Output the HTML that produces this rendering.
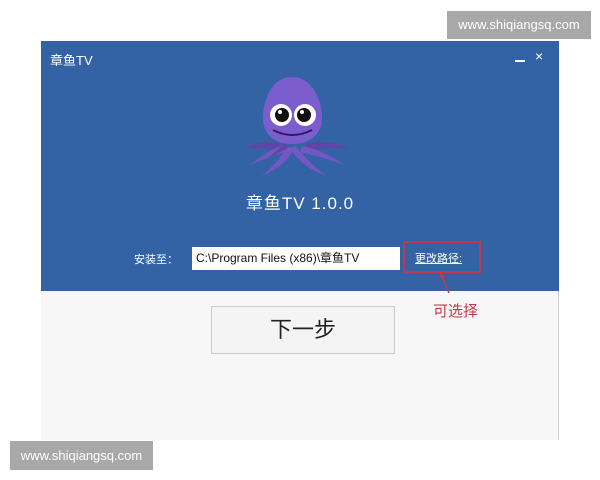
<!DOCTYPE html>
<html><head><meta charset="utf-8"><style>
*{margin:0;padding:0;box-sizing:border-box}
body{width:600px;height:480px;background:#fff;position:relative;overflow:hidden;font-family:"Liberation Sans","Noto Sans CJK SC",sans-serif}
.wm{position:absolute;background:#a8a8a8;color:#fff;font-size:13px;line-height:28px;text-align:center}
#win{position:absolute;left:41px;top:41px;width:518px;height:399px;background:#f7f7f7;border-right:1px solid #ccc}
#blue{position:absolute;left:0;top:0;width:518px;height:250px;background:#3463a5}
.abs{position:absolute}
</style></head><body>
<div class="wm" style="left:447px;top:11px;width:144px;height:28px">www.shiqiangsq.com</div>
<div id="win">
 <div id="blue">
  <div class="abs" style="left:9px;top:9px;color:#fff;font-size:13px">章鱼TV</div>
  <div class="abs" style="left:474px;top:19px;width:10px;height:2px;background:#fff"></div>
  <div class="abs" style="left:494px;top:7px;color:#fff;font-size:14px">×</div>
  <div class="abs" style="left:0;width:518px;top:148px;text-align:center;color:#fff;font-size:17px;letter-spacing:1px">章鱼TV 1.0.0</div>
  <div class="abs" style="left:93px;top:210px;color:#fff;font-size:11px">安装至：</div>
  <div class="abs" style="left:151px;top:206px;width:208px;height:23px;background:#fff;font-size:12px;line-height:23px;padding-left:4px;color:#111">C:\Program Files (x86)\章鱼TV</div>
  <div class="abs" style="left:374px;top:209px;color:#fff;font-size:11px;text-decoration:underline">更改路径:</div>
  <div class="abs" style="left:362px;top:200px;width:78px;height:32px;border:2px solid #c0394a"></div>
 </div>
 <svg class="abs" style="left:390px;top:225px" width="30" height="30"><path d="M10 7 L18 27" stroke="#c0394a" stroke-width="1.5"/><path d="M8 5 L10 14 L14 11Z" fill="#c0394a"/></svg>
 <div class="abs" style="left:392px;top:259px;color:#c0394a;font-size:15px">可选择</div>
 <div class="abs" style="left:170px;top:265px;width:184px;height:48px;border:1px solid #ccc;background:#f4f4f4;text-align:center;line-height:46px;font-size:22px;color:#222">下一步</div>
</div>
<svg class="abs" style="left:200px;top:60px" width="200" height="130" viewBox="200 60 200 130">
 <g fill="#7456c4">
  <path d="M244 148 Q262 140 280 143 L282 150 Q262 148 244 148Z" fill="#5f45a8"/>
  <path d="M350 148 Q330 140 306 143 L304 150 Q328 148 350 148Z" fill="#5f45a8"/>
  <path d="M250 165 Q268 150 282 146 L286 152 Q270 156 250 165Z"/>
  <path d="M344 165 Q324 150 302 146 L300 152 Q320 156 344 165Z"/>
  <path d="M262 176 Q280 160 288 146 L294 148 Q286 166 262 176Z"/>
  <path d="M326 176 Q306 160 296 146 L290 148 Q300 166 326 176Z"/>
  <path d="M268 158 Q282 152 290 146 L284 144Z" fill="#5f45a8"/>
 </g>
 <path d="M292 77 C312 77 322 100 322 118 C322 134 310 144 292 144 C274 144 263 134 263 118 C263 100 272 77 292 77Z" fill="#7c5dcd"/>
 <circle cx="281" cy="115" r="11" fill="#fff"/><circle cx="305" cy="115" r="11" fill="#fff"/>
 <circle cx="282" cy="115" r="7" fill="#111"/><circle cx="304" cy="115" r="7" fill="#111"/>
 <circle cx="280" cy="112" r="2" fill="#fff"/><circle cx="302" cy="112" r="2" fill="#fff"/>
 <path d="M273 130 Q292 140 312 130" stroke="#2e1a66" stroke-width="2" fill="none"/>
</svg>
<div class="wm" style="left:10px;top:441px;width:143px;height:29px;line-height:29px">www.shiqiangsq.com</div>
</body></html>
